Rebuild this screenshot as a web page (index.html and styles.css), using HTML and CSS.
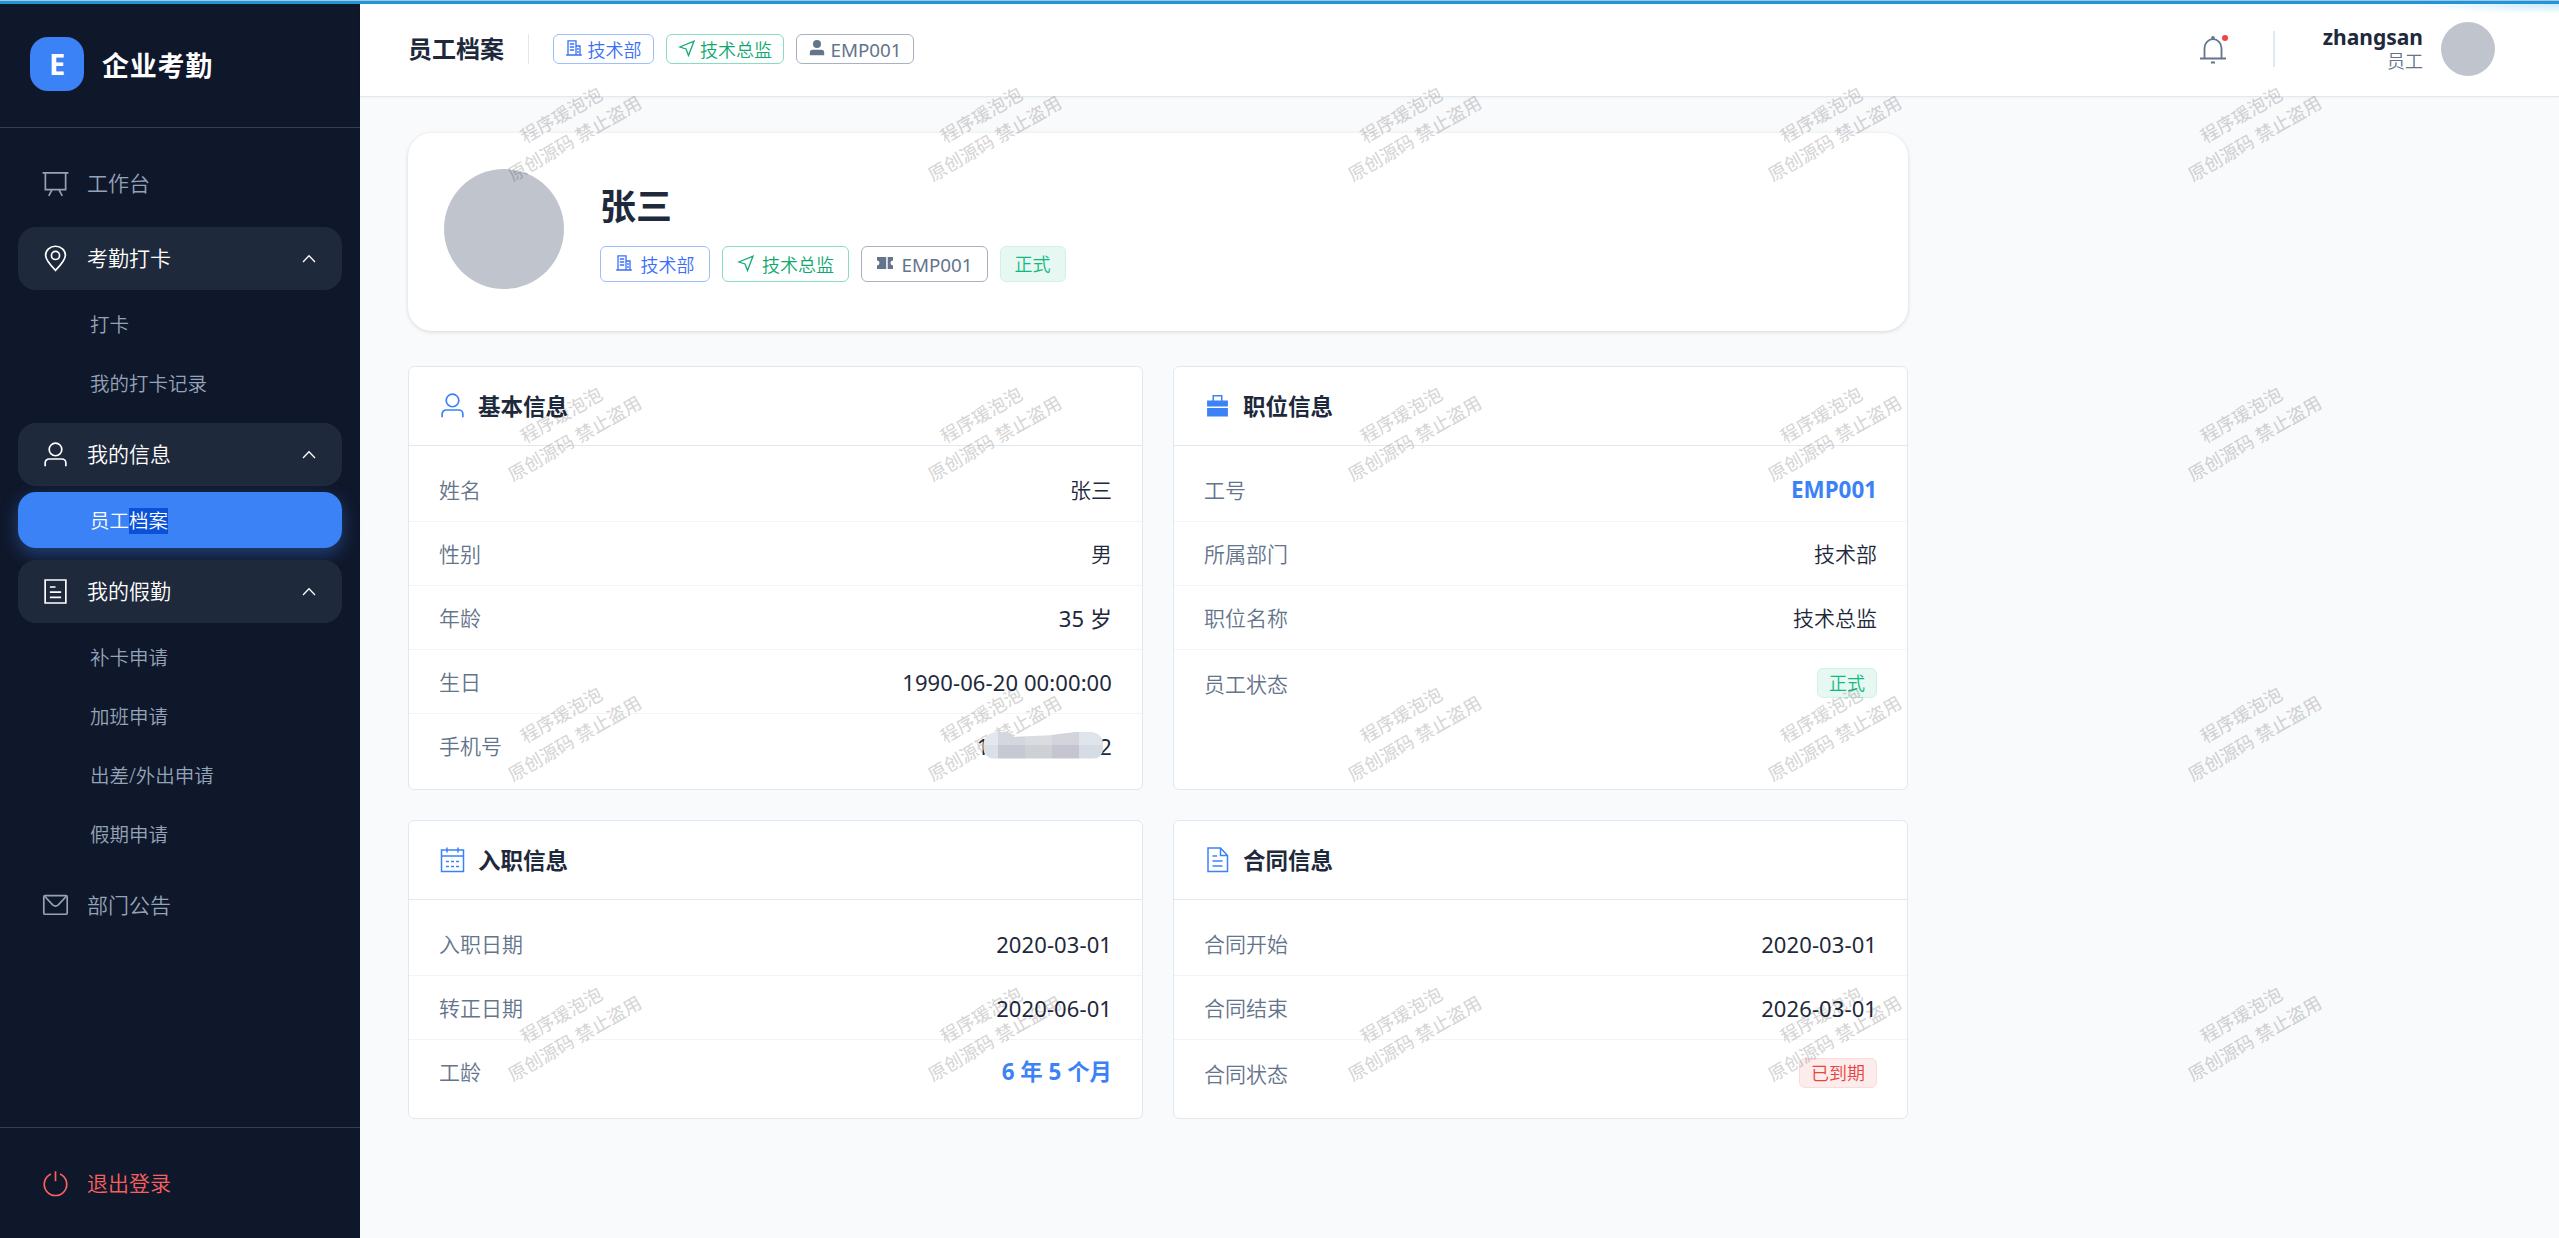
FILE: index.html
```html
<!DOCTYPE html>
<html lang="zh-CN">
<head>
  <meta charset="UTF-8">
  <title>员工档案 - 企业考勤</title>
  <link rel="stylesheet" href="styles.css">
</head>
<body>
  <div class="top-line"></div>

  <!-- 图标 -->
  <svg class="sprite" width="0" height="0">
    <symbol id="i-board" viewBox="0 0 24 24"><path d="M.5 2.500h23M3 2.500v15h18v-15M9 17.500l-3 5.500M15 17.500l3 5.500"/></symbol>
    <symbol id="i-pin" viewBox="0 0 24 24"><path d="M12 22.600C6 16.500 3.200 13 3.200 9.200a8.800 8.100 0 0 1 17.600 0C20.800 13 18 16.500 12 22.600z"/><circle cx="12" cy="9.300" r="3.600"/></symbol>
    <symbol id="i-user" viewBox="0 0 24 24"><circle cx="12" cy="7.500" r="5.600"/><path d="M2.800 22.500v-3a3.500 3.500 0 0 1 3.500-3.500h11.400a3.500 3.500 0 0 1 3.500 3.500v3"/></symbol>
    <symbol id="i-form" viewBox="0 0 24 24"><path d="M2.800 1.800h18.400v20.400H2.800zM7 8h5M7 12.500h10M7 17.200h10"/></symbol>
    <symbol id="i-mail" viewBox="0 0 24 24"><rect x="1.600" y="3.200" width="20.800" height="16.600" rx="1.200"/><path d="M2.500 4l7 7.500q2.500 2 5 0l7-7.500"/></symbol>
    <symbol id="i-power" viewBox="0 0 24 24"><path d="M8 3.500a10 10 0 1 0 8 0M12 1v9"/></symbol>
    <symbol id="i-up" viewBox="0 0 18 18"><path d="M3 12l6-6.200 6 6.200"/></symbol>
    <symbol id="i-office" viewBox="0 0 18 18"><path d="M3 16V1.800h8V16M11 7h4v9M1.200 16h15.600M4.800 5h4.400M4.800 8h4.400M4.800 11h4.400M12 10h1.800M12 13h1.800"/></symbol>
    <symbol id="i-send" viewBox="0 0 18 18"><path d="M1.800 8L16 2.200 10.500 16.500 8 10z"/></symbol>
    <symbol id="i-bell" viewBox="0 0 30 30"><path d="M6.500 24.500V14a8.500 8.800 0 0 1 17 0v10.500M2 24.500h26M13 28.500h4"/><circle cx="15" cy="4" r="1"/></symbol>
    <symbol id="i-calendar" viewBox="1.5 1.5 27 27"><path d="M4 5.500h22V27H4zM4 11.500h22M9.500 3v5M20.500 3v5M8.500 17h3M13.500 17h3M18.500 17h3M8.500 22h3M13.500 22h3M18.500 22h3"/></symbol>
    <symbol id="i-doc" viewBox="1.5 1.5 27 27"><path d="M5.500 3.500h12.500l7 7.500V27h-19.500zM18 3.500v7.500h7M10 11.500h4.500M10 16.500h10M10 21.500h10"/></symbol>
    <symbol id="i-avatar" viewBox="0 0 18 18"><circle cx="9" cy="5" r="4"/><path d="M1.800 16.200v-2.400a3 3 0 0 1 3-3h8.400a3 3 0 0 1 3 3v2.400z"/></symbol>
    <symbol id="i-ticket" viewBox="0 0 18 18"><path d="M1 3h9.200v12H1v-3.500a2.500 2.500 0 0 0 0-5zM11.700 3H17v3.500a2.500 2.500 0 0 0 0 5V15h-5.300z"/></symbol>
    <symbol id="i-case" viewBox="1.5 1.500 27 27"><path d="M4.600 10h5.400V4.500h10V10h5.400v6H4.600zM11.500 6v4h7V6zM4.600 17.500h20.800V26H4.600z" fill-rule="evenodd"/></symbol>
  </svg>

  <div class="layout">
    <aside class="sidebar">
      <div class="logo">
        <div class="logo-icon">E</div>
        <div class="logo-text">企业考勤</div>
      </div>

      <nav class="menu">
        <a class="menu-item"><svg class="icon"><use href="#i-board"/></svg>工作台</a>

        <div class="menu-group">
          <a class="menu-item open"><svg class="icon"><use href="#i-pin"/></svg>考勤打卡<svg class="arrow"><use href="#i-up"/></svg></a>
          <a class="sub-item">打卡</a>
          <a class="sub-item">我的打卡记录</a>
        </div>

        <div class="menu-group">
          <a class="menu-item open"><svg class="icon"><use href="#i-user"/></svg>我的信息<svg class="arrow"><use href="#i-up"/></svg></a>
          <a class="sub-item active">员工<span class="selected">档案</span></a>
        </div>

        <div class="menu-group">
          <a class="menu-item open"><svg class="icon"><use href="#i-form"/></svg>我的假勤<svg class="arrow"><use href="#i-up"/></svg></a>
          <a class="sub-item">补卡申请</a>
          <a class="sub-item">加班申请</a>
          <a class="sub-item">出差/外出申请</a>
          <a class="sub-item">假期申请</a>
        </div>

        <a class="menu-item"><svg class="icon"><use href="#i-mail"/></svg>部门公告</a>
      </nav>

      <div class="sidebar-footer">
        <a class="menu-item logout"><svg class="icon"><use href="#i-power"/></svg>退出登录</a>
      </div>
    </aside>

    <div class="main">
      <header class="header">
        <h1 class="page-title">员工档案</h1>
        <div class="tags">
          <span class="tag blue"><svg class="tag-icon"><use href="#i-office"/></svg>技术部</span>
          <span class="tag green"><svg class="tag-icon"><use href="#i-send"/></svg>技术总监</span>
          <span class="tag gray"><svg class="tag-icon solid"><use href="#i-avatar"/></svg>EMP001</span>
        </div>
        <div class="bell"><svg><use href="#i-bell"/></svg><i class="dot"></i></div>
        <div class="account">
          <div class="account-info">
            <div class="account-name">zhangsan</div>
            <div class="account-role">员工</div>
          </div>
          <div class="avatar"></div>
        </div>
      </header>

      <main class="content">
        <section class="profile">
          <div class="avatar avatar-big"></div>
          <div class="profile-info">
            <h2 class="profile-name">张三</h2>
            <div class="tags large">
              <span class="tag blue"><svg class="tag-icon"><use href="#i-office"/></svg>技术部</span>
              <span class="tag green"><svg class="tag-icon"><use href="#i-send"/></svg>技术总监</span>
              <span class="tag gray"><svg class="tag-icon solid"><use href="#i-ticket"/></svg>EMP001</span>
              <span class="tag success">正式</span>
            </div>
          </div>
        </section>

        <div class="info-grid">
          <section class="card">
            <h3 class="card-title"><svg><use href="#i-user"/></svg>基本信息</h3>
            <div class="card-body">
              <div class="row"><span class="label">姓名</span><span class="value">张三</span></div>
              <div class="row"><span class="label">性别</span><span class="value">男</span></div>
              <div class="row"><span class="label">年龄</span><span class="value num">35 岁</span></div>
              <div class="row"><span class="label">生日</span><span class="value num">1990-06-20 00:00:00</span></div>
              <div class="row"><span class="label">手机号</span><span class="value num phone">1<i class="mask"></i>2</span></div>
            </div>
          </section>

          <section class="card">
            <h3 class="card-title"><svg class="solid"><use href="#i-case"/></svg>职位信息</h3>
            <div class="card-body">
              <div class="row"><span class="label">工号</span><span class="value strong">EMP001</span></div>
              <div class="row"><span class="label">所属部门</span><span class="value">技术部</span></div>
              <div class="row"><span class="label">职位名称</span><span class="value">技术总监</span></div>
              <div class="row"><span class="label">员工状态</span><span class="tag success">正式</span></div>
            </div>
          </section>

          <section class="card">
            <h3 class="card-title"><svg><use href="#i-calendar"/></svg>入职信息</h3>
            <div class="card-body">
              <div class="row"><span class="label">入职日期</span><span class="value num">2020-03-01</span></div>
              <div class="row"><span class="label">转正日期</span><span class="value num">2020-06-01</span></div>
              <div class="row"><span class="label">工龄</span><span class="value strong">6 年 5 个月</span></div>
            </div>
          </section>

          <section class="card">
            <h3 class="card-title"><svg><use href="#i-doc"/></svg>合同信息</h3>
            <div class="card-body">
              <div class="row"><span class="label">合同开始</span><span class="value num">2020-03-01</span></div>
              <div class="row"><span class="label">合同结束</span><span class="value num">2026-03-01</span></div>
              <div class="row"><span class="label">合同状态</span><span class="tag danger">已到期</span></div>
            </div>
          </section>
        </div>
      </main>
    </div>
  </div>

  <div class="watermark" id="watermark"></div>

  <script>
    // 水印：5 列 x 4 行
    const watermark = document.getElementById("watermark");
    for (let i = 0; i < 20; i++) {
      watermark.innerHTML += "<div><p>程序瑗泡泡<br>原创源码 禁止盗用</p></div>";
    }
  </script>
</body>
</html>
```
FILE: styles.css
```css
* { box-sizing: border-box; margin: 0; padding: 0; }
body { font-family: "Noto Sans", "Noto Sans CJK SC", sans-serif; font-size: 21px; font-weight: 350; background: #f9fafc; color: #1e293b; height: 1238px; overflow: hidden; }
svg { fill: none; stroke: currentColor; stroke-width: 1.5; flex: none; }
.sprite { position: absolute; }
.solid { fill: currentColor; stroke: none; }
.top-line { height: 4px; background: #1f96dc; border-top: 1px solid #a9c4d4; }
.layout { display: flex; height: 1234px; }

.sidebar { width: 360px; background: #0f172a; display: flex; flex-direction: column; }
.logo { height: 124px; padding: 0 30px 3px; display: flex; align-items: center; gap: 18px; border-bottom: 1px solid #334155; }
.logo-icon { width: 54px; height: 54px; border-radius: 18px; background: #3b82f6; color: #fff; font-size: 29px; font-weight: 700; line-height: 54px; text-align: center; }
.logo-text { color: #fff; font-size: 27px; font-weight: 700; letter-spacing: 0.75px; }
.menu { flex: 1; padding: 24px 18px; display: flex; flex-direction: column; gap: 12px; }
.menu-item { height: 63px; padding: 0 24px; border-radius: 18px; display: flex; align-items: center; gap: 18px; line-height: 61px; color: #94a3b8; }
.menu-item .icon { width: 27px; height: 27px; }
.menu-item .arrow { width: 18px; height: 18px; margin-left: auto; stroke-width: 1.3; }
.menu-item.open { background: #1e293b; color: #fff; margin-bottom: 6px; }
.sub-item { display: block; height: 56px; line-height: 58px; padding-left: 72px; border-radius: 18px; font-size: 19.5px; color: #94a3b8; margin-bottom: 3px; }
.sub-item:last-child { margin-bottom: 0; }
.sub-item.active { background: #3b82f6; color: #fff; box-shadow: 0 6px 18px rgba(59, 130, 246, 0.4); }
.selected { background: #0a51d8; display: inline-block; height: 26px; line-height: 26px; }
.sidebar-footer { height: 111px; padding: 24px 18px; border-top: 1px solid #334155; }
.menu-item.logout { color: #f8605f; }

.main { flex: 1; min-width: 0; }
.header { height: 93px; padding: 0 64px 3px 48px; background: radial-gradient(ellipse 150px 10px at 100% 0, #c9e9fa, #fff); border-bottom: 1px solid #e2e8f0; display: flex; align-items: center; box-shadow: 0 1px 3px rgba(0, 0, 0, 0.03); }
.page-title { font-size: 24px; font-weight: 700; line-height: 30px; padding-right: 24px; margin-right: 24px; border-right: 1px solid #e2e8f0; }
.tags { display: flex; gap: 12px; }
.tag { display: inline-flex; align-items: center; height: 30px; padding: 0 11px; border: 1px solid; border-radius: 6px; font-size: 18px; line-height: 26px; background: #fff; }
.tag-icon { width: 18px; height: 18px; margin-right: 4.5px; stroke-width: 1.3; position: relative; top: -2px; }
.tag.blue { color: #3b6ff6; border-color: #9dc0fb; padding-top: 2px; }
.tag.green { color: #10a870; border-color: #88dcc0; padding-top: 2px; }
.tag.gray { color: #64748b; border-color: #a8b1bf; padding-top: 2px; font-size: 18.8px; font-weight: 400; }
.tag.success { color: #10b981; background: #e7f8f2; border-color: #cff1e6; }
.tag.danger { color: #e8443f; background: #fdecec; border-color: #fcdada; }
.tags.large .tag { height: 36px; padding-left: 14px; padding-right: 14px; }
.tags.large .tag-icon { margin-right: 7.5px; }
.bell { position: relative; width: 30px; height: 30px; margin-left: auto; margin-right: 45px; color: #64748b; }
.bell svg { width: 30px; height: 30px; stroke-width: 1.8; }
.dot { position: absolute; top: 1px; right: 0; width: 6px; height: 6px; border-radius: 50%; background: #ef4444; }
.account { display: flex; align-items: center; gap: 18px; padding-left: 48px; }
.account::before { content: ""; width: 2px; height: 36px; background: #e2e8f0; margin-left: -48px; margin-right: 30px; }
.account-info { text-align: right; }
.account-name { font-weight: 700; line-height: 26px; }
.account-role { font-size: 18px; line-height: 23px; color: #64748b; }
.avatar { width: 54px; height: 54px; border-radius: 50%; background: #c0c4cc; }
.avatar-big { width: 120px; height: 120px; }

.content { width: 1596px; padding: 36px 48px; }
.profile { height: 198px; padding: 36px; background: #fff; border-radius: 24px; box-shadow: 0 1px 4px rgba(0, 0, 0, 0.14); display: flex; gap: 36px; margin-bottom: 35px; }
.profile-info { padding-top: 11px; }
.profile-name { font-size: 36px; font-weight: 700; line-height: 54px; margin-bottom: 12px; }
.info-grid { display: grid; grid-template-columns: 1fr 1fr; gap: 30px; }
.card { background: #fff; border: 1px solid #e2e8f0; border-radius: 6px; }
.card-title { display: flex; align-items: center; gap: 12px; height: 79px; padding: 0 30px 1px; font-size: 22.5px; font-weight: 700; border-bottom: 1px solid #e2e8f0; }
.card-title svg { width: 27px; height: 27px; color: #3b82f6; }
.card-body { padding: 12px 0; }
.row { display: flex; justify-content: space-between; align-items: center; padding: 18px 30px; line-height: 26px; border-bottom: 1px solid #f1f5f9; }
.row:last-child { border-bottom: none; }
.label { color: #64748b; padding-top: 1px; }
.value { padding-top: 1px; }
.num { font-size: 22px; font-weight: 400; letter-spacing: 0.1px; }
.strong { color: #3b82f6; font-size: 22.4px; font-weight: 700; }
.phone { display: flex; align-items: center; }
/* 手机号打码 */
.mask { width: 120px; height: 27px; border-radius: 14px 12px 10px 12px; margin: -2px -4px 0 -6px; background: linear-gradient(rgba(255, 255, 255, 0.25) 50%, transparent 50%), linear-gradient(90deg, #dbe0e8 15px, #c5c9d4 15px 42px, #cdd0d4 42px 69px, #c4c5d0 69px 96px, #d6dce4 96px); clip-path: polygon(0 0, 20% 0, 26% 20%, 55% 14%, 80% 0, 100% 0, 100% 100%, 0 100%); z-index: 1; }

.watermark { position: absolute; left: 358px; top: -23px; width: 2100px; display: grid; grid-template-columns: repeat(5, 420px); grid-auto-rows: 300px; place-items: center; pointer-events: none; }
.watermark p { transform: rotate(-30deg); text-align: center; font-size: 18.2px; font-weight: 500; line-height: 27px; color: rgba(0, 0, 0, 0.17); }
```
